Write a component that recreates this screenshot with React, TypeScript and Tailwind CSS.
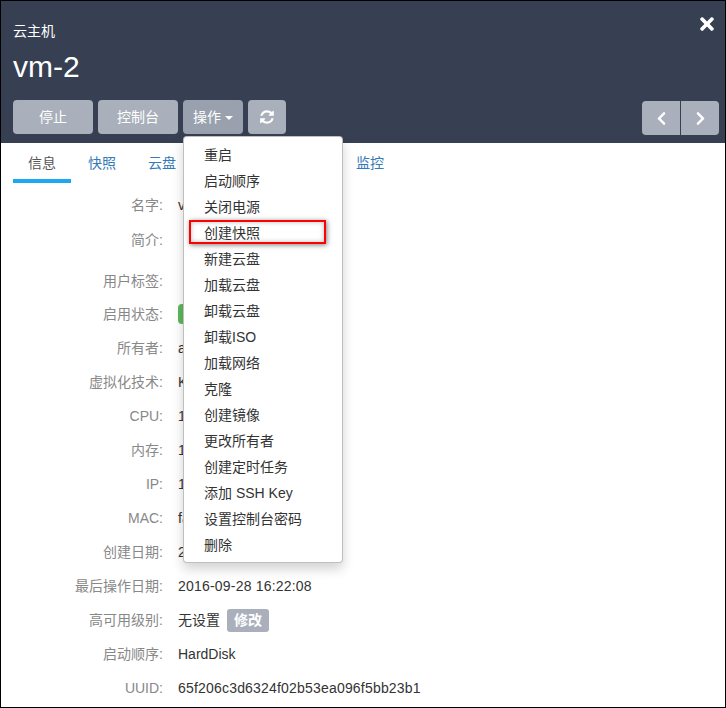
import { FaChevronLeft, FaChevronRight, FaTimes } from 'react-icons/fa'

const tabs = [
  { label: '信息', active: true },
  { label: '快照' },
  { label: '云盘' },
  { label: '网络' },
  { label: '定时任务' },
  { label: '监控' },
]

const menuItems = [
  '重启',
  '启动顺序',
  '关闭电源',
  '创建快照',
  '新建云盘',
  '加载云盘',
  '卸载云盘',
  '卸载ISO',
  '加载网络',
  '克隆',
  '创建镜像',
  '更改所有者',
  '创建定时任务',
  '添加 SSH Key',
  '设置控制台密码',
  '删除',
]

const simpleRows = [
  ['所有者', 'admin'],
  ['虚拟化技术', 'KVM'],
  ['CPU', '1'],
  ['内存', '1 GB'],
  ['IP', '172.20.11.5'],
  ['MAC', 'fa:a2:4c:3e:9d:00'],
  ['创建日期', '2016-09-28 16:21:40'],
]

const btn =
  'flex h-[34px] items-center justify-center rounded-[4px] text-white'

function Row({
  label,
  className = 'h-[34px]',
  children,
}: {
  label: string
  className?: string
  children: React.ReactNode
}) {
  return (
    <div className={`flex items-center ${className}`}>
      <div className="w-[162px] text-right text-[#888]">{label}:</div>
      <div className="ml-[15px] flex items-center text-[#333]">{children}</div>
    </div>
  )
}

function RefreshIcon() {
  return (
    <svg viewBox="0 0 1792 1792" className="h-[16px] w-[16px] fill-current">
      <path d="M1639 1056q0 5-1 7-64 268-268 434.5t-478 166.5q-146 0-282.5-55t-243.5-157l-129 129q-19 19-45 19t-45-19-19-45v-448q0-26 19-45t45-19h448q26 0 45 19t19 45-19 45l-137 137q71 66 161 102t187 36q134 0 250-65t186-179q11-17 53-117 8-23 30-23h192q13 0 22.5 9.5t9.5 22.5zm25-800v448q0 26-19 45t-45 19h-448q-26 0-45-19t-19-45 19-45l138-138q-148-137-349-137-134 0-250 65t-186 179q-11 17-53 117-8 23-30 23h-199q-13 0-22.5-9.5t-9.5-22.5v-7q65-268 270-434.5t480-166.5q146 0 284 55.5t245 156.5l130-129q19-19 45-19t45 19 19 45z" />
    </svg>
  )
}

export default function App() {
  return (
    <div className="relative h-[708px] w-[726px] overflow-hidden border border-black bg-white font-['Liberation_Sans','Noto_Sans_CJK_SC',sans-serif] text-[14px]">
      <header className="relative h-[142px] bg-[#364052] pl-3 pr-[6px] pt-[20px] text-white">
        <button className="absolute right-[8px] top-[13px] text-[20px]">
          <FaTimes />
        </button>
        <div className="h-[20px] leading-[20px]">云主机</div>
        <div className="mt-[5px] h-[42px] text-[30px] leading-[42px]">vm-2</div>
        <div className="mt-[12px] flex items-start">
          <button className={`${btn} w-[80px] bg-[#a9b0bb]`}>停止</button>
          <button className={`${btn} ml-[5px] w-[80px] bg-[#a9b0bb]`}>控制台</button>
          <button className={`${btn} ml-[5px] w-[60px] bg-[#98a1ad]`}>
            操作
            <span className="ml-[4px] mt-[2px] border-x-[4px] border-t-[4px] border-x-transparent border-t-white" />
          </button>
          <button className={`${btn} ml-[5px] w-[38px] bg-[#a9b0bb]`}>
            <RefreshIcon />
          </button>
          <div className="ml-auto mt-[1px] flex gap-px">
            <button className="flex h-[34px] w-[38px] items-center justify-center rounded-l-[4px] bg-[#a9b0bb] text-[15px] text-white">
              <FaChevronLeft />
            </button>
            <button className="flex h-[34px] w-[38px] items-center justify-center rounded-r-[4px] bg-[#a9b0bb] text-[15px] text-white">
              <FaChevronRight />
            </button>
          </div>
        </div>
      </header>

      <nav className="flex h-[40px] gap-[2px] pl-3">
        {tabs.map((tab) => (
          <div
            key={tab.label}
            className={`h-[40px] px-[15px] pt-[10px] leading-[20px] ${
              tab.active
                ? 'border-b-4 border-[#1ea7f2] text-[#555]'
                : 'text-[#337ab7]'
            }`}
          >
            {tab.label}
          </div>
        ))}
      </nav>

      <section className="pt-[5px]">
        <Row label="名字" className="h-[34px]">
          vm-2
        </Row>
        <Row label="简介" className="h-[36px]">
          {' '}
        </Row>
        <Row label="用户标签" className="mt-[7px] h-[32px]">
          {' '}
        </Row>
        <Row label="启用状态">
          <span className="flex h-[20px] w-[40px] items-center justify-center rounded-[4px] bg-[#5cb85c] text-[12px] text-white">
            启用
          </span>
        </Row>
        {simpleRows.map(([label, value]) => (
          <Row key={label} label={label}>
            {value}
          </Row>
        ))}
        <Row label="最后操作日期">
          <span className="tracking-[0.2px]">2016-09-28 16:22:08</span>
        </Row>
        <Row label="高可用级别">
          无设置
          <span className="ml-[7px] flex h-[23px] w-[42px] items-center justify-center rounded-[3px] bg-[#a9b0bb] font-bold text-white">
            修改
          </span>
        </Row>
        <Row label="启动顺序">HardDisk</Row>
        <Row label="UUID">
          <span className="tracking-[0.19px]">65f206c3d6324f02b53ea096f5bb23b1</span>
        </Row>
      </section>

      <div className="absolute left-[182px] top-[135px] w-[160px] rounded-[4px] border border-black/25 bg-white pb-[4px] pt-[5px] text-[#333] shadow-[0_6px_12px_rgba(0,0,0,0.175)]">
        {menuItems.map((item) => (
          <div key={item} className="h-[26px] pl-[20px] leading-[26px]">
            {item}
          </div>
        ))}
      </div>
      <div className="absolute left-[188px] top-[219px] h-[24px] w-[137px] border-2 border-[#ff0000] shadow-[1px_1px_5px_rgba(0,0,0,0.5),inset_0_0_5px_rgba(0,0,0,0.25)]" />
    </div>
  )
}
